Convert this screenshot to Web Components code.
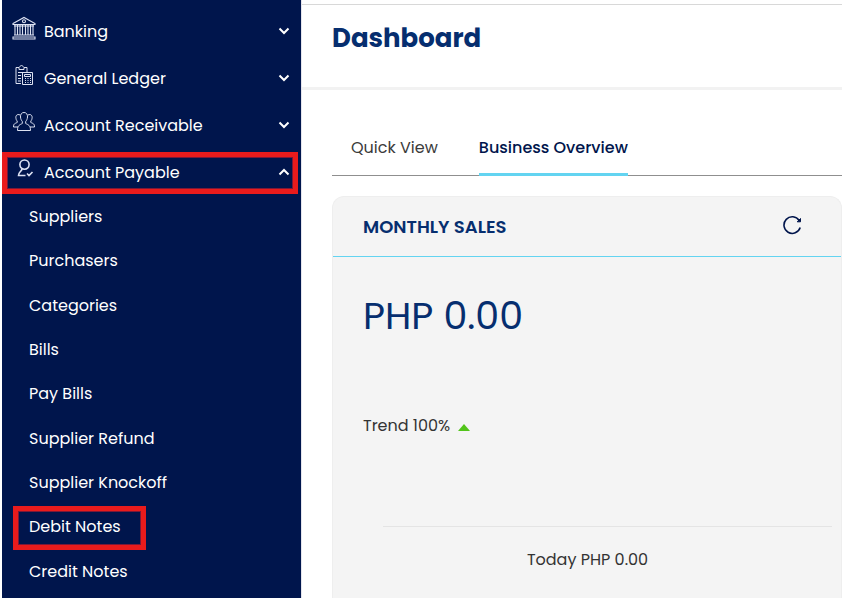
<!DOCTYPE html>
<html lang="en">
<head>
<meta charset="utf-8">
<title>Dashboard</title>
<style>
  body { margin: 0; font-family: Poppins, Inter, "Open Sans", sans-serif; font-size: 16px; line-height: 24px; color: #333; background: #fff; }
</style>
</head>
<body>
<app-shell>
  <side-nav slot="nav">
    <nav-group icon="bank">Banking</nav-group>
    <nav-group icon="ledger">General Ledger</nav-group>
    <nav-group icon="people">Account Receivable</nav-group>
    <nav-group icon="payable" open marked>Account Payable</nav-group>
    <nav-list slot="list">
      <nav-link>Suppliers</nav-link>
      <nav-link>Purchasers</nav-link>
      <nav-link>Categories</nav-link>
      <nav-link>Bills</nav-link>
      <nav-link>Pay Bills</nav-link>
      <nav-link>Supplier Refund</nav-link>
      <nav-link>Supplier Knockoff</nav-link>
      <nav-link marked>Debit Notes</nav-link>
      <nav-link>Credit Notes</nav-link>
    </nav-list>
  </side-nav>
  <page-header slot="header">Dashboard</page-header>
  <tab-bar>
    <tab-item>Quick View</tab-item>
    <tab-item selected>Business Overview</tab-item>
  </tab-bar>
  <sales-card>
    <span slot="title">Monthly Sales</span>
    <span slot="amount">PHP 0.00</span>
    <span slot="trend">Trend 100%</span>
    <span slot="footer">Today PHP 0.00</span>
  </sales-card>
</app-shell>

<script>
const icons = {
  bank: `<g stroke-width="1.1"><path d="M1 7.5 12 1.5 23 7.5V8.500H1Z"/><circle cx="12" cy="5.300" r="1.500"/><path d="M3 9v10M5.500 9v10M8 9v10M10.500 9v10M13.500 9v10M16 9v10M18.500 9v10M21 9v10M2 10h20M2 19h20M1 21h22v2H1z"/></g>`,
  ledger: `<g stroke-width="1"><path d="M9 20.500H4V4.500H7L9.500 2 12 4.500H15V9"/><path d="M7 4.500V6.500H12V4.500M6 9.500H12M6 12.500H9M6 15.500H9M6 18H9"/><path d="M10.500 9.500H20.500V21.500H10.500ZM12.500 11.500H18.500V13.500H12.500ZM13 15.500H14M15.500 15.500H16.500M18 15.500H19M13 17.500H14M15.500 17.500H16.500M18 17.500H19M13 19.500H14M15.500 19.500H16.500M18 19.500H19"/></g>`,
  people: `<g stroke-width="1"><path d="M12 2.500C9.500 2.500 8.300 4.500 8.500 7C8.600 9 9.500 10.500 10.300 11.500V13.500C8 14.800 5.500 15 5.500 20.500H18.500C18.500 15 16 14.800 13.700 13.500V11.500C14.500 10.500 15.400 9 15.500 7C15.700 4.500 14.500 2.500 12 2.500Z"/><path d="M8 5C5 3.500 3.300 6 4 8.500C4.200 10 4.800 10.500 5.200 11V12.500C3 13.500 1.500 13.500 1.500 17H6M16 5C19 3.500 20.700 6 20 8.500C19.800 10 19.200 10.500 18.800 11V12.500C21 13.500 22.500 13.500 22.500 17H18"/></g>`,
  payable: `<g stroke-width="1.6"><circle cx="12.500" cy="7.600" r="4.600"/><path d="M10 12C9.500 14.500 6.500 15 6.500 18.500H13.500M15 16.500 17 18.500 20.500 15"/></g>`
};

function define(name, html, setup) {
  const template = document.createElement("template");
  template.innerHTML = html;
  customElements.define(name, class extends HTMLElement {
    constructor() {
      super();
      this.attachShadow({ mode: "open" }).append(template.content.cloneNode(true));
    }
    connectedCallback() {
      if (setup) setup(this, this.shadowRoot);
    }
  });
}

define("app-shell", `
  <style>
    :host { display: grid; grid-template-columns: 299px minmax(0, 1fr); min-height: 100vh; padding-left: 2px; box-sizing: border-box; }
    .page { display: flex; flex-direction: column; border-left: 1px solid #e4e4ec; }
    main { display: flex; flex-direction: column; flex: 1; padding: 44px 0 0 30px; }
  </style>
  <slot name="nav"></slot>
  <div class="page"><slot name="header"></slot><main><slot></slot></main></div>`);

define("side-nav", `
  <style>
    :host { display: block; background: #00154c; color: #fff; }
    nav { display: flex; flex-direction: column; height: 100%; padding: 7px 0 4px; box-sizing: border-box; }
    slot[name=list] { display: flex; flex: 1; }
  </style>
  <nav aria-label="Accounting"><slot></slot><slot name="list"></slot></nav>`);

define("nav-group", `
  <style>
    :host { display: block; position: relative; height: 47px; }
    button { display: flex; align-items: center; gap: 8px; width: 100%; height: 100%; padding: 2px 10px 0; border: 0; background: none; color: inherit; font: inherit; text-align: left; cursor: pointer; box-sizing: border-box; }
    svg { fill: none; stroke: #fff; flex: none; }
    .icon { width: 24px; height: 24px; margin-bottom: 8px; stroke: #dde2f2; }
    .label { flex: 1; }
    .chevron { width: 14px; height: 10px; margin-bottom: 2px; stroke-width: 2; }
    :host([open]) .chevron { transform: rotate(180deg); }
    :host([marked])::after { content: ""; position: absolute; inset: 4px 3px 1px 0; border: 5px solid #e91b1c; outline: 1px solid #7b1938; outline-offset: -6px; pointer-events: none; }
  </style>
  <button type="button">
    <svg class="icon" viewBox="0 0 24 24" aria-hidden="true"></svg>
    <span class="label"><slot></slot></span>
    <svg class="chevron" viewBox="0 0 14 10" aria-hidden="true"><path d="M2.500 2.500 7 7 11.500 2.500"/></svg>
  </button>`, (host, root) => {
    root.querySelector(".icon").innerHTML = icons[host.getAttribute("icon")];
    root.querySelector("button").setAttribute("aria-expanded", host.hasAttribute("open"));
  });

define("nav-list", `
  <style>
    :host { display: grid; grid-auto-rows: minmax(40px, 1fr); flex: 1; }
  </style>
  <slot></slot>`);

define("nav-link", `
  <style>
    :host { display: flex; align-items: center; padding-left: 27px; }
    a { position: relative; color: inherit; text-decoration: none; }
    :host([marked]) a::after { content: ""; position: absolute; inset: -9px -25px -11px -16px; border: 5px solid #e91b1c; outline: 1px solid #7b1938; outline-offset: -6px; pointer-events: none; }
  </style>
  <a href="#"><slot></slot></a>`);

define("page-header", `
  <style>
    :host { display: block; padding-top: 4px; }
    header { border-top: 1px solid #d8d8d8; border-bottom: 3px solid #f2f2f2; padding: 15px 30px 31px; }
    h1 { margin: 0; font-size: 26px; line-height: 36px; font-weight: 700; color: #062e6f; }
  </style>
  <header><h1><slot></slot></h1></header>`);

define("tab-bar", `
  <style>
    :host { display: flex; gap: 41px; padding-left: 19px; border-bottom: 1px solid #8f8f8f; }
  </style>
  <slot></slot>`, host => host.setAttribute("role", "tablist"));

define("tab-item", `
  <style>
    :host { display: block; margin-bottom: -1px; }
    button { display: block; padding: 2px 0 13px; border: 0; border-bottom: 3px solid transparent; background: none; font: inherit; color: #3b3b3b; cursor: pointer; }
    :host([selected]) button { border-color: #63d4f1; color: #00154c; font-weight: 500; }
  </style>
  <button type="button" role="tab"><slot></slot></button>`, (host, root) => {
    root.querySelector("button").setAttribute("aria-selected", host.hasAttribute("selected"));
  });

define("sales-card", `
  <style>
    :host { display: block; flex: 1; margin-top: 20px; border: 1px solid #eee; border-bottom: 0; border-radius: 12px 12px 0 0; background: #f4f4f4; }
    .head { display: flex; align-items: center; justify-content: space-between; height: 59px; padding: 0 39px 0 30px; border-bottom: 1px solid #63d4f1; }
    h2 { margin: 0; font-size: 18px; line-height: 24px; font-weight: 600; text-transform: uppercase; color: #062e6f; }
    button { display: flex; padding: 0; border: 0; background: none; cursor: pointer; }
    .refresh { width: 20px; height: 20px; margin-bottom: 4px; fill: none; stroke: #00154c; stroke-width: 1.600; }
    .body { padding: 31px 9px 16px 30px; }
    .amount { margin: 0; font-size: 38px; line-height: 56px; color: #062e6f; }
    .trend { display: flex; align-items: center; gap: 8px; margin: 70px 0 88px; }
    .up { width: 12px; height: 7px; fill: #52c41a; margin-top: 2px; }
    .today { margin: 0 0 0 20px; padding-top: 21px; border-top: 1px solid #e4e4e4; }
    .today p { margin: 0 40px 0 0; text-align: center; }
  </style>
  <section>
    <div class="head">
      <h2><slot name="title"></slot></h2>
      <button type="button" aria-label="Refresh"><svg class="refresh" viewBox="0 0 20 20"><path d="M18.200 12.600A8.300 8.300 0 1 1 17.200 5.500"/><path d="M18.500 3.500V6.800H15.200Z" fill="#00154c" stroke-width="1"/></svg></button>
    </div>
    <div class="body">
      <p class="amount"><slot name="amount"></slot></p>
      <p class="trend"><slot name="trend"></slot><svg class="up" viewBox="0 0 12 7" aria-hidden="true"><path d="M6 0 12 7H0Z"/></svg></p>
      <div class="today"><p><slot name="footer"></slot></p></div>
    </div>
  </section>`);
</script>
</body>
</html>
